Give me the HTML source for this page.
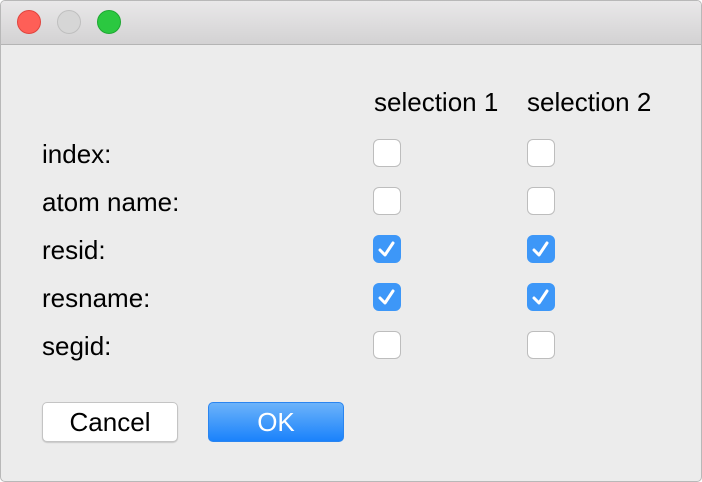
<!DOCTYPE html>
<html><head><style>
body{margin:0;width:702px;height:482px;overflow:hidden;background:#fff;font-family:"Liberation Sans",sans-serif;}
.win{position:absolute;left:0;top:0;width:700px;height:480px;border:1px solid #b8b8b8;border-radius:5px;background:#ececec;overflow:hidden;}
.tb{position:absolute;left:0;top:0;right:0;height:43px;background:linear-gradient(#e9e8e9,#d3d2d3);border-bottom:1px solid #b4b4b4;}
.c{position:absolute;top:9px;width:22px;height:22px;border-radius:50%;}
.t{position:absolute;font-size:26px;color:#000;line-height:30px;}
.cb{position:absolute;width:26px;height:26px;border:1px solid #bdbdbd;border-radius:6px;background:#fff;}
.cb.on{background:#3d97f8;border-color:#3d97f8;}
.cb svg{position:absolute;left:0;top:0}
.btn{position:absolute;top:401px;width:134px;height:38px;border-radius:5px;font-size:26px;text-align:center;line-height:38px;}
</style></head><body>
<div class="win">
<div class="tb">
<div class="c" style="left:16px;background:#fe5f57;border:1px solid #e0443e"></div>
<div class="c" style="left:56px;background:#d6d6d6;border:1px solid #bfbfbf"></div>
<div class="c" style="left:96px;background:#2bc840;border:1px solid #1ea832"></div>
</div>
<div class="t" style="left:373px;top:86px">selection 1</div>
<div class="t" style="left:526px;top:86px">selection 2</div>
<div class="t" style="left:41px;top:138px">index:</div>
<div class="t" style="left:41px;top:186px">atom name:</div>
<div class="t" style="left:41px;top:234px">resid:</div>
<div class="t" style="left:41px;top:282px">resname:</div>
<div class="t" style="left:41px;top:330px">segid:</div>

<div class="cb" style="left:372px;top:138px"></div>
<div class="cb" style="left:526px;top:138px"></div>
<div class="cb" style="left:372px;top:186px"></div>
<div class="cb" style="left:526px;top:186px"></div>
<div class="cb on" style="left:372px;top:234px"><svg width="26" height="26"><path d="M6 14 L11 19 L19 7" fill="none" stroke="#fff" stroke-width="3" stroke-linecap="round" stroke-linejoin="round"/></svg></div>
<div class="cb on" style="left:526px;top:234px"><svg width="26" height="26"><path d="M6 14 L11 19 L19 7" fill="none" stroke="#fff" stroke-width="3" stroke-linecap="round" stroke-linejoin="round"/></svg></div>
<div class="cb on" style="left:372px;top:282px"><svg width="26" height="26"><path d="M6 14 L11 19 L19 7" fill="none" stroke="#fff" stroke-width="3" stroke-linecap="round" stroke-linejoin="round"/></svg></div>
<div class="cb on" style="left:526px;top:282px"><svg width="26" height="26"><path d="M6 14 L11 19 L19 7" fill="none" stroke="#fff" stroke-width="3" stroke-linecap="round" stroke-linejoin="round"/></svg></div>
<div class="cb" style="left:372px;top:330px"></div>
<div class="cb" style="left:526px;top:330px"></div>

<div class="btn" style="left:41px;background:#fff;border:1px solid #c4c4c4;box-shadow:0 1px 1px rgba(0,0,0,.15)">Cancel</div>
<div class="btn" style="left:207px;background:linear-gradient(#6cb3fa,#1a82fb);border:1px solid #2a85f0;color:#fff">OK</div>
</div>
</body></html>
